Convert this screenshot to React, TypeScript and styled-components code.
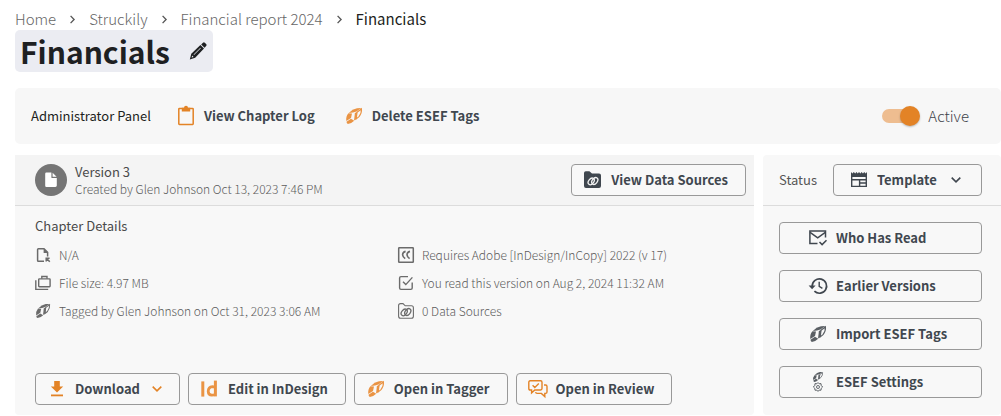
import React from "react";
import styled, { createGlobalStyle, css } from "styled-components";

const GlobalStyle = createGlobalStyle`
  *, *::before, *::after { box-sizing: border-box; }
  body {
    margin: 0;
    background: #fff;
    color: #3e444b;
    font-family: "Noto Sans CJK SC", "Noto Sans", sans-serif;
  }
`;

const orange = "#e38326";
const softOrange = "#ea9444";
const slate = "#40474f";
const grey = "#6b6b6b";

/* ---------- icons ---------- */

type IconProps = { size?: number; color?: string };

const Glyph = styled.svg<{ $size: number; $color: string }>`
  display: block;
  flex: none;
  width: ${(p) => p.$size}px;
  height: ${(p) => p.$size}px;
  overflow: visible;
  color: ${(p) => p.$color};
  fill: none;
  stroke: currentColor;
`;

const makeIcon =
  (viewBox: string, art: React.ReactNode) =>
  ({ size = 18, color = slate }: IconProps) => (
    <Glyph viewBox={viewBox} $size={size} $color={color} aria-hidden="true">
      {art}
    </Glyph>
  );

const Separator = makeIcon("0 0 8 8", <path d="M2.3 0.8 L5.4 4 L2.3 7.2" strokeWidth="1.2" />);

const ChevronDown = makeIcon("0 0 10 10", <path d="M0.7 2.6 L5 6.8 L9.3 2.6" strokeWidth="1.6" />);

const Pencil = makeIcon(
  "0 0 18 18",
  <g stroke="none" fill="currentColor">
    <path d="M12.2 2.4 L14 0.7 Q15 0 15.8 0.7 L17.3 2.2 Q18 3 17.3 3.8 L15.6 5.8 Z" />
    <path
      fillRule="evenodd"
      d="M11.4 3 L15 6.6 L6.2 15.7 L0.8 17.4 L2.3 11.8 Z M3.2 13.6 L2.6 15.6 L4.6 15 Z M5 13 L11.8 6.2 L11.4 5.8 L4.6 12.6 Z"
    />
  </g>
);

const Clipboard = makeIcon(
  "0 0 18 18",
  <>
    <rect x="1.8" y="1.4" width="14.4" height="16" rx="0.6" strokeWidth="1.5" />
    <path d="M4.8 0.8 H7 A2 2 0 0 1 11 0.8 H13.2 V4.4 H4.8 Z" fill="currentColor" stroke="none" />
  </>
);

const taggerArt = (
  <>
    <g stroke="none" fill="currentColor">
      <path d="M2.8 4.9 Q6.4 1 11 0.2 L15.4 0 L10.4 3.6 L7 4.6 Z" />
      <path d="M2.4 5.3 L6 5.4 L5 10 L0.3 13 Q-0.4 8.8 2.4 5.3 Z" />
      <path d="M0.5 13.8 L5 10.7 L8.2 12.8 Q5 16 1.8 16 Q0.6 15.4 0.5 13.8 Z" />
      <path d="M8.9 5 L11.2 4 L10.5 10.9 L8 12.5 Z" />
    </g>
    <path d="M11 4.2 L15.4 0.9 Q15.9 5 13 8.6 L10.2 10.9 Z" strokeWidth="1.2" />
  </>
);

const Tagger = makeIcon("-1 -1 18 18", taggerArt);

const TaggerSettings = makeIcon(
  "1 1 18 18",
  <>
    <g transform="translate(5 0) scale(0.62)">{taggerArt}</g>
    <path
      d="M10 10.6 L11.2 11.8 L13 11.6 L13.2 13.4 L14.6 15 L13.2 16.4 L13 18.2 L11.2 18.1 L10 19.4 L8.8 18.1 L7 18.2 L6.8 16.4 L5.4 15 L6.8 13.4 L7 11.6 L8.8 11.8 Z"
      strokeWidth="1"
    />
    <circle cx="10" cy="15" r="1.5" strokeWidth="0.9" />
  </>
);

const linkRings = (
  <g strokeWidth="1.3">
    <ellipse cx="7.2" cy="10.4" rx="2.5" ry="3.7" transform="rotate(38 7.2 10.4)" />
    <ellipse cx="10.8" cy="10" rx="2.5" ry="3.7" transform="rotate(38 10.8 10)" />
  </g>
);

const FolderLinkSolid = makeIcon(
  "0 0 18 18",
  <>
    <path
      d="M0 2 Q0 0.2 1.8 0.2 H5.4 L8 2.6 H15 Q17 2.6 17 4.6 V15 Q17 17 15 17 H2 Q0 17 0 15 Z"
      fill="currentColor"
      stroke="none"
    />
    <g color="#f4f4f4" stroke="currentColor">
      {linkRings}
    </g>
  </>
);

const FolderLink = makeIcon(
  "1 1 16 16",
  <>
    <path
      d="M1.6 3.6 Q1.6 1.6 3.6 1.6 H6 L8.2 3.8 H14.4 Q16.4 3.8 16.4 5.8 V14.2 Q16.4 16.2 14.4 16.2 H3.6 Q1.6 16.2 1.6 14.2 Z"
      strokeWidth="1.1"
    />
    {linkRings}
  </>
);

const DocumentIcon = makeIcon(
  "0 0 14 16",
  <path
    d="M2.4 0.6 H7.4 V5.4 Q7.4 6 8 6 H12.8 V13.6 Q12.8 15 11.4 15 H2.4 Q1.2 15 1.2 13.8 V1.8 Q1.2 0.6 2.4 0.6 Z M8.6 0.8 L12.6 4.8 H8.6 Z"
    fill="currentColor"
    stroke="none"
  />
);

const FileLink = makeIcon(
  "0 0 16 16",
  <>
    <path d="M9 14.2 H3.4 Q2.6 14.2 2.6 13.4 V2.6 Q2.6 1.8 3.4 1.8 H9 L12.6 5.4 V9.4" strokeWidth="1.5" />
    <path d="M8.6 1.4 L13.2 6 H8.6 Z" fill="currentColor" stroke="none" />
    <path d="M14.8 14.8 L11.4 11.4 M11.2 14.4 V11.2 H14.6" strokeWidth="1.5" />
  </>
);

const Cases = makeIcon(
  "0 0 16 16",
  <>
    <rect x="3.7" y="3.9" width="11.4" height="7.8" rx="0.6" strokeWidth="1.4" />
    <path d="M6.8 3.8 V1.5 H12 V3.8 M0.8 5.2 V14.4 H13.2" strokeWidth="1.4" />
  </>
);

const CreativeCloud = makeIcon(
  "0 0 16 16",
  <>
    <rect x="0.7" y="0.7" width="14.6" height="14.6" rx="0.6" strokeWidth="1.5" />
    <path
      d="M7.6 4.4 Q4.6 5 4.6 7.8 Q4.8 9.8 7.2 11.6 M12 4.4 Q9 5 9 7.8 Q9.2 9.8 11.6 11.6"
      strokeWidth="1.6"
    />
  </>
);

const ReadTick = makeIcon(
  "0 0 16 16",
  <>
    <path d="M10 1.6 H3 Q1.6 1.6 1.6 3 V13 Q1.6 14.4 3 14.4 H12.8 Q14.2 14.4 14.2 13 V7.4" strokeWidth="1.4" />
    <path d="M5 6.8 L7.8 9.6 L14.4 2.4" strokeWidth="1.4" />
  </>
);

const Download = makeIcon(
  "0 0 18 18",
  <>
    <path d="M6.2 1 H11.8 V6.4 H15.2 L9 12.6 L2.8 6.4 H6.2 Z" fill="currentColor" stroke="none" />
    <path d="M3 15.4 H15" strokeWidth="1.8" />
  </>
);

const InDesign = makeIcon(
  "1 0 18 18",
  <>
    <path d="M2.8 1.4 V16.6" strokeWidth="3" />
    <path d="M15.4 0.6 V16.4" strokeWidth="3" />
    <path
      d="M15.2 7.2 Q13.8 6.6 12.4 6.6 Q8.4 7 8.2 11.2 Q8.4 15.2 11.8 15.2 Q13.8 15.2 15.2 14.4"
      strokeWidth="2.8"
    />
  </>
);

const Review = makeIcon(
  "1 0 18 18",
  <>
    <path
      d="M2.2 0.8 H12.6 Q14 0.8 14 2.2 V8.6 Q14 10 12.6 10 H6.8 L3.6 13 V10 H2.2 Q0.8 10 0.8 8.6 V2.2 Q0.8 0.8 2.2 0.8 Z"
      strokeWidth="1.4"
    />
    <path
      d="M4.6 5.2 L6.8 7.4 L10.8 3.6 M16 5 H17.6 Q19 5 19 6.4 V12 Q19 13.4 17.6 13.4 H16.8 V16.6 L13.4 13.4 H9 Q7.8 13.4 7.6 12.2"
      strokeWidth="1.4"
    />
  </>
);

const Newspaper = makeIcon(
  "0 0 18 18",
  <>
    <path
      d="M1 1 L2.4 2.4 L3.8 1 L5.2 2.4 L6.4 1 L7.8 2.4 L9 1 L10.4 2.4 L11.6 1 L13 2.4 L14.2 1 L15.6 2.4 L17 1 V6 H1 Z"
      fill="currentColor"
      stroke="none"
    />
    <path d="M1.7 5 V15.4 H16.3 V5 M2 8.8 H16 M9.6 8.8 V15 M9.6 12 H16" strokeWidth="1.4" />
  </>
);

const MailRead = makeIcon(
  "1.5 0 18 18",
  <>
    <path d="M10 14.4 H2.4 V2 H18 V8.4" strokeWidth="1.5" />
    <path d="M2.6 3.4 L10.2 8.8 L17.8 3.4 M12 13 L14.6 15.6 L19 11.2" strokeWidth="1.5" />
  </>
);

const History = makeIcon(
  "0.6 0 18 18",
  <>
    <path d="M3.8 9 A7.2 7.2 0 1 1 6 14.2" strokeWidth="1.7" />
    <path d="M10.8 4.8 V9.4 L14 11.4" strokeWidth="1.4" />
    <path d="M0.2 8.6 H7.2 L3.7 12.2 Z" fill="currentColor" stroke="none" />
  </>
);

/* ---------- page ---------- */

const Page = styled.div`
  padding: 10px 0 0 15px;
`;

const Crumbs = styled.nav`
  ol {
    display: flex;
    align-items: center;
    gap: 12px;
    margin: 0;
    padding: 0;
    list-style: none;
    font-size: 15px;
    line-height: 18px;
  }
  li {
    display: flex;
    align-items: center;
    gap: 12px;
  }
`;

const CrumbLink = styled.a<{ $current?: boolean }>`
  color: ${(p) => (p.$current ? "#1d1f21" : "#666")};
  font-weight: ${(p) => (p.$current ? 400 : 300)};
  text-decoration: none;
`;

const TitleBox = styled.div`
  display: flex;
  align-items: center;
  gap: 19px;
  width: fit-content;
  height: 42px;
  margin-top: 2px;
  padding: 0 6px 0 5px;
  border-radius: 5px;
  background: #ebecf2;
`;

const Title = styled.h1`
  margin: 0;
  color: #1e2022;
  font-size: 30px;
  line-height: 40px;
  font-weight: 700;
`;

const plainButton = css`
  display: flex;
  align-items: center;
  margin: 0;
  padding: 0;
  border: 0;
  background: none;
  color: ${slate};
  font: inherit;
  cursor: pointer;
`;

const IconButton = styled.button`
  ${plainButton}
`;

const AdminBar = styled.section`
  display: flex;
  align-items: center;
  height: 56px;
  margin-top: 16px;
  padding: 0 32px 0 16px;
  border-radius: 5px;
  background: #f7f7f7;
`;

const AdminTitle = styled.h2`
  margin: 0 26px 0 0;
  color: #1d1f21;
  font-size: 13px;
  line-height: 20px;
  font-weight: 400;
`;

const TextButton = styled.button`
  ${plainButton}
  gap: 9px;
  margin-right: 30px;
  font-size: 13px;
  line-height: 20px;
  font-weight: 700;
`;

const SwitchLabel = styled.label`
  display: flex;
  align-items: center;
  gap: 8px;
  margin-left: auto;
  font-size: 15px;
  line-height: 20px;
  font-weight: 300;
`;

const Switch = styled.input`
  appearance: none;
  display: grid;
  align-items: center;
  width: 38px;
  height: 20px;
  margin: 0;
  cursor: pointer;

  &::before,
  &::after {
    content: "";
    grid-area: 1 / 1;
  }
  &::before {
    width: 34px;
    height: 14px;
    border-radius: 7px;
    background: #c4c4c4;
  }
  &::after {
    width: 20px;
    height: 20px;
    border-radius: 50%;
    background: #fafafa;
    box-shadow: 0 1px 2px rgba(0, 0, 0, 0.25);
  }
  &:checked::before {
    background: #eebd90;
  }
  &:checked::after {
    justify-self: end;
    background: ${orange};
  }
`;

const Columns = styled.main`
  display: grid;
  grid-template-columns: minmax(0, 1fr) 238px;
  gap: 9px;
  margin-top: 11px;
`;

const Card = styled.section`
  display: flex;
  flex-direction: column;
  border-radius: 4px;
  background: #f8f8f8;
`;

const CardHeader = styled.header<{ $shaded?: boolean }>`
  display: flex;
  align-items: center;
  justify-content: space-between;
  height: 51px;
  padding: ${(p) => (p.$shaded ? "0 8px 0 20px" : "0 19px 0 16px")};
  border-bottom: 1px solid #dcdcdc;
  background: ${(p) => (p.$shaded ? "#f4f4f4" : "transparent")};
`;

const VersionInfo = styled.div`
  display: flex;
  align-items: center;
  gap: 8px;
`;

const Avatar = styled.span`
  display: grid;
  place-items: center;
  width: 32px;
  height: 32px;
  border-radius: 50%;
  background: #757575;
`;

const VersionName = styled.h2`
  margin: 0;
  color: #4a4a4a;
  font-size: 13px;
  line-height: 17px;
  font-weight: 400;
`;

const VersionMeta = styled.p`
  margin: 0;
  color: #5c5c5c;
  font-size: 12px;
  line-height: 17px;
  font-weight: 300;
`;

const outline = css`
  height: 32px;
  border: 1px solid #999;
  border-radius: 4px;
  background: #f8f8f8;
  color: ${slate};
  font-family: inherit;
  font-size: 13px;
  line-height: 20px;
  font-weight: 700;
  cursor: pointer;
`;

const OutlineButton = styled.button<{ $wide?: boolean }>`
  ${outline}
  display: flex;
  align-items: center;
  gap: 9px;
  padding: ${(p) => (p.$wide ? "0 29px" : "0 17px 0 12px")};
`;

const MenuArrow = styled.span`
  margin-left: 3px;
`;

const StatusPicker = styled.span`
  ${outline}
  display: flex;
  align-items: center;
  gap: 9px;
  padding: 0 20px 0 16px;
`;

const StatusSelect = styled.select`
  appearance: none;
  margin: 0 5px 0 0;
  padding: 0;
  border: 0;
  background: none;
  color: inherit;
  font: inherit;
  cursor: pointer;
`;

const StatusLabel = styled.label`
  color: #555;
  font-size: 13px;
  line-height: 20px;
`;

const CardBody = styled.div`
  display: flex;
  flex: 1;
  flex-direction: column;
  padding: 10px 20px;
`;

const SectionTitle = styled.h3`
  margin: 0;
  color: #4a4a4a;
  font-size: 13px;
  line-height: 20px;
  font-weight: 400;
`;

const Details = styled.ul`
  display: grid;
  grid-template-columns: 363px 1fr;
  margin: 5px 0 48px;
  padding: 0;
  list-style: none;
`;

const Detail = styled.li`
  display: flex;
  align-items: center;
  gap: 8px;
  height: 28px;
  color: #5c5c5c;
  font-size: 12px;
  line-height: 16px;
  font-weight: 300;
`;

const Actions = styled.div`
  display: flex;
  gap: 8px;
`;

const SideActions = styled.div`
  display: flex;
  flex-direction: column;
  gap: 16px;
  padding: 16px 19px 16px 16px;
`;

const crumbs = ["Home", "Struckily", "Financial report 2024", "Financials"];

const details = [
  { icon: <FileLink size={16} color={grey} />, text: "N/A" },
  { icon: <CreativeCloud size={16} color={grey} />, text: "Requires Adobe [InDesign/InCopy] 2022 (v 17)" },
  { icon: <Cases size={16} color={grey} />, text: "File size: 4.97 MB" },
  { icon: <ReadTick size={16} color={grey} />, text: "You read this version on Aug 2, 2024 11:32 AM" },
  { icon: <Tagger size={16} color={grey} />, text: "Tagged by Glen Johnson on Oct 31, 2023 3:06 AM" },
  { icon: <FolderLink size={16} color={grey} />, text: "0 Data Sources" },
];

const sideActions = [
  { icon: <MailRead />, text: "Who Has Read" },
  { icon: <History />, text: "Earlier Versions" },
  { icon: <Tagger color="#5a5f64" />, text: "Import ESEF Tags" },
  { icon: <TaggerSettings color="#5a5f64" />, text: "ESEF Settings" },
];

export default function App() {
  return (
    <>
      <GlobalStyle />
      <Page>
        <Crumbs aria-label="Breadcrumb">
          <ol>
            {crumbs.map((name, i) => (
              <li key={name}>
                {i > 0 && <Separator size={9} color="#555" />}
                <CrumbLink href="#" $current={i === crumbs.length - 1}>
                  {name}
                </CrumbLink>
              </li>
            ))}
          </ol>
        </Crumbs>

        <TitleBox>
          <Title>Financials</Title>
          <IconButton aria-label="Edit title">
            <Pencil color="#1e2022" />
          </IconButton>
        </TitleBox>

        <AdminBar>
          <AdminTitle>Administrator Panel</AdminTitle>
          <TextButton>
            <Clipboard color={orange} />
            View Chapter Log
          </TextButton>
          <TextButton>
            <Tagger color={softOrange} />
            Delete ESEF Tags
          </TextButton>
          <SwitchLabel>
            <Switch type="checkbox" role="switch" defaultChecked />
            Active
          </SwitchLabel>
        </AdminBar>

        <Columns>
          <Card>
            <CardHeader $shaded>
              <VersionInfo>
                <Avatar>
                  <DocumentIcon size={16} color="#fff" />
                </Avatar>
                <div>
                  <VersionName>Version 3</VersionName>
                  <VersionMeta>Created by Glen Johnson Oct 13, 2023 7:46 PM</VersionMeta>
                </div>
              </VersionInfo>
              <OutlineButton>
                <FolderLinkSolid />
                View Data Sources
              </OutlineButton>
            </CardHeader>
            <CardBody>
              <SectionTitle>Chapter Details</SectionTitle>
              <Details>
                {details.map((d) => (
                  <Detail key={d.text}>
                    {d.icon}
                    {d.text}
                  </Detail>
                ))}
              </Details>
              <Actions>
                <OutlineButton aria-haspopup="menu">
                  <Download color={orange} />
                  Download
                  <MenuArrow>
                    <ChevronDown size={10} color={orange} />
                  </MenuArrow>
                </OutlineButton>
                <OutlineButton>
                  <InDesign color={softOrange} />
                  Edit in InDesign
                </OutlineButton>
                <OutlineButton>
                  <Tagger color={softOrange} />
                  Open in Tagger
                </OutlineButton>
                <OutlineButton>
                  <Review color={orange} />
                  Open in Review
                </OutlineButton>
              </Actions>
            </CardBody>
          </Card>

          <Card>
            <CardHeader>
              <StatusLabel htmlFor="status">Status</StatusLabel>
              <StatusPicker>
                <Newspaper />
                <StatusSelect id="status" defaultValue="Template">
                  <option>Template</option>
                </StatusSelect>
                <ChevronDown size={10} />
              </StatusPicker>
            </CardHeader>
            <SideActions>
              {sideActions.map((a) => (
                <OutlineButton key={a.text} $wide>
                  {a.icon}
                  {a.text}
                </OutlineButton>
              ))}
            </SideActions>
          </Card>
        </Columns>
      </Page>
    </>
  );
}
